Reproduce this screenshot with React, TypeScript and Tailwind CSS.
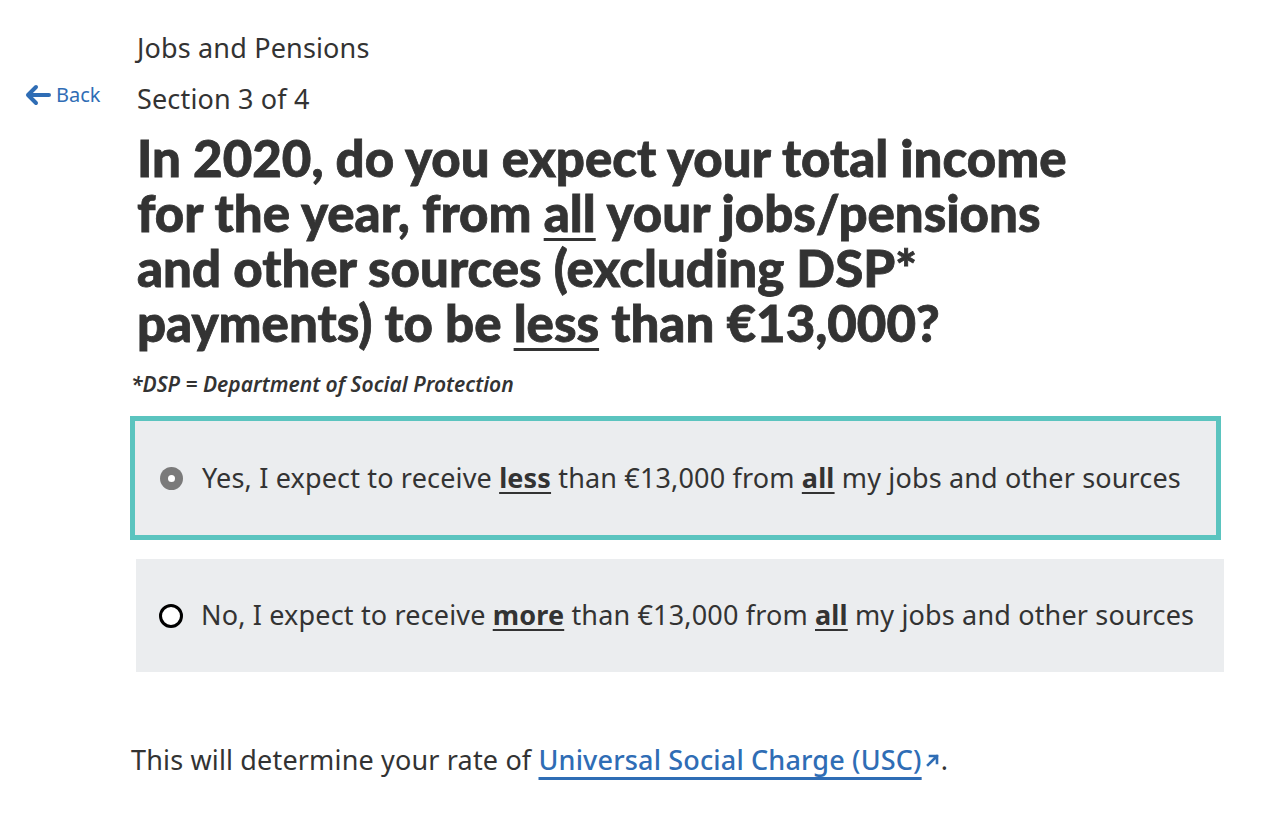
import React from "react";

const body = { fontFamily: "'Noto Sans', 'Open Sans', sans-serif" };
const head = { fontFamily: "Lato, 'Noto Sans', sans-serif" };

function Radio({ checked }: { checked: boolean }) {
  if (checked) {
    return (
      <span className="flex h-[23px] w-[23px] shrink-0 items-center justify-center rounded-full bg-[#7a7a7a]">
        <span className="h-[7px] w-[7px] rounded-full bg-white" />
      </span>
    );
  }
  return <span className="h-[24px] w-[24px] shrink-0 rounded-full border-[3px] border-black bg-white" />;
}

export default function App() {
  return (
    <div className="min-h-screen bg-white text-[#333] tracking-[0.01em]" style={body}>
      <div className="flex pt-[30px]">
        {/* back link column */}
        <div className="w-[137px] shrink-0 pl-[25px] pt-[54px]">
          <a href="#" className="flex items-center gap-[5px] text-[20px] leading-none tracking-normal text-[#2f6db5]">
            <svg width="26" height="22" viewBox="0 0 26 22" fill="none">
              <path d="M11 3 L3 11 L11 19 M3 11 H24" stroke="#2f6db5" strokeWidth="4" strokeLinecap="round" strokeLinejoin="round" />
            </svg>
            Back
          </a>
        </div>

        <div className="flex-1">
          <p className="text-[27px] leading-[36px]">Jobs and Pensions</p>
          <p className="mt-[15px] text-[27px] leading-[36px]">Section 3 of 4</p>
          <h1
            className="mt-[13px] text-[51px] font-black leading-[55px] tracking-normal text-[#333] [-webkit-text-stroke:0.8px_#333]"
            style={head}
          >
            In 2020, do you expect your total income
            <br />
            for the year, from <span className="underline decoration-[3px] underline-offset-[6px]">all</span> your jobs/pensions
            <br />
            and other sources (excluding DSP*
            <br />
            payments) to be <span className="underline decoration-[3px] underline-offset-[6px]">less</span> than €13,000?
          </h1>
        </div>
      </div>

      <p className="mt-[20px] pl-[131px] text-[21px] font-semibold italic leading-[28px] tracking-normal">
        *DSP = Department of Social Protection
      </p>

      <div className="mt-[18px] flex flex-col gap-[19px] pl-[130px] pr-[59px]">
        <label className="flex h-[124px] items-center gap-[19px] border-[5px] border-[#5bc4bf] bg-[#ebedef] pl-[25px] text-[27px]">
          <Radio checked />
          <span>
            Yes, I expect to receive <b className="font-bold underline decoration-[2px] underline-offset-[4px]">less</b> than €13,000 from{" "}
            <b className="font-bold underline decoration-[2px] underline-offset-[4px]">all</b> my jobs and other sources
          </span>
        </label>
        <label className="ml-[6px] mr-[-3px] flex h-[113px] items-center gap-[18px] bg-[#ebedef] pl-[23px] text-[27px]">
          <Radio checked={false} />
          <span>
            No, I expect to receive <b className="font-bold underline decoration-[2px] underline-offset-[4px]">more</b> than €13,000 from{" "}
            <b className="font-bold underline decoration-[2px] underline-offset-[4px]">all</b> my jobs and other sources
          </span>
        </label>
      </div>

      <p className="mt-[70px] flex items-baseline pl-[131px] text-[27px] leading-[36px]">
        <span className="whitespace-pre">This will determine your rate of </span>
        <a href="#" className="font-medium text-[#2f6db5] underline decoration-[3px] underline-offset-[7px]">
          Universal Social Charge (USC)
        </a>
        <svg className="ml-[3px] self-center" width="16" height="16" viewBox="0 0 16 16" fill="none">
          <path d="M3 13 L12 4 M5 4 H12 V11" stroke="#2f6db5" strokeWidth="2.6" strokeLinecap="square" />
        </svg>
        <span>.</span>
      </p>
    </div>
  );
}
